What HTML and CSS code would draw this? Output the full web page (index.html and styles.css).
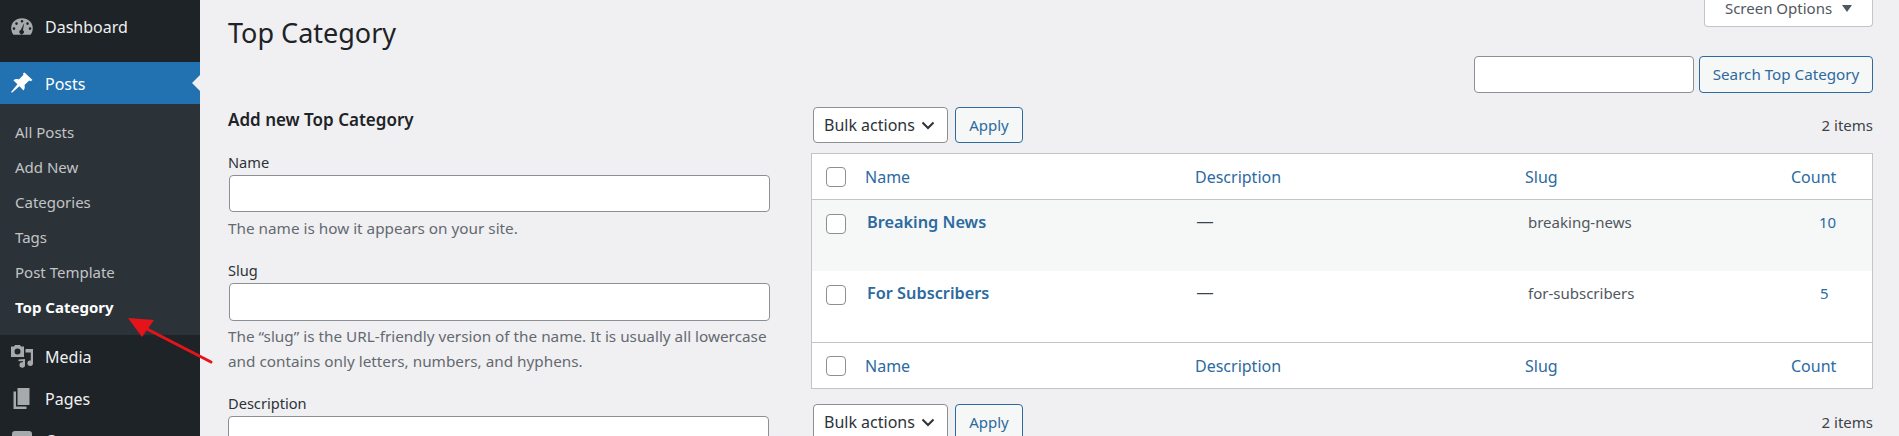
FILE: index.html
```html
<!DOCTYPE html>
<html lang="en">
<head>
<meta charset="utf-8">
<title>Top Category</title>
<link rel="stylesheet" href="styles.css">
</head>
<body>
<div class="shell">
  <nav class="sidebar">
    <a class="menu-item dash">
      <svg class="menu-icon" viewBox="0 0 24 24"><path fill="#a7aaad" fill-rule="evenodd" d="M12 3.200C5.600 3.200 1.200 7.600 1.200 13.200c0 2.600.9 4.800 2.300 6.600h17c1.400-1.800 2.300-4 2.300-6.600 0-5.600-4.400-10-10.800-10zM12 5a1.300 1.300 0 1 1 0 2.600A1.300 1.300 0 0 1 12 5zM6.500 7.300a1.300 1.300 0 1 1 0 2.600 1.300 1.300 0 0 1 0-2.600zm11 0a1.300 1.300 0 1 1 0 2.600 1.300 1.300 0 0 1 0-2.600zM4 12.300a1.300 1.300 0 1 1 0 2.600 1.300 1.300 0 0 1 0-2.600zm16 0a1.300 1.300 0 1 1 0 2.600 1.300 1.300 0 0 1 0-2.600zM14.200 8l-1.300 7.200a2.200 2.200 0 1 1-2.100-.2z"/></svg>
      <span>Dashboard</span>
    </a>
    <a class="menu-item current">
      <svg class="menu-icon" viewBox="0 0 24 24"><path fill="#fff" d="M14.500 1.500l8 7.500-2 1.300-1.300-.8-4.700 4.600c.6 2.200.2 3.900-.9 5.300l-4.200-4.200-7.400 6.500-.9-.8 6.300-7.600-4-4.100c1.500-1.100 3.300-1.400 5.400-.8l4.700-4.600-.6-1.200z"/></svg>
      <span>Posts</span>
    </a>
    <ul class="submenu">
      <li>All Posts</li>
      <li>Add New</li>
      <li>Categories</li>
      <li>Tags</li>
      <li>Post Template</li>
      <li class="active">Top Category</li>
    </ul>
    <a class="menu-item">
      <svg class="menu-icon" viewBox="0 0 24 24"><path fill="#a7aaad" fill-rule="evenodd" d="M1 2.500h3l1-1.500h5l1 1.500h3v10.500H1zM7.500 4.500a3 3 0 1 0 0 6 3 3 0 0 0 0-6zM15.500 5h7.500v14.200a2.800 2.800 0 1 1-2.200-2.700V8.500h-5.300zM8.500 15.500l6.500-.5v6a2.800 2.800 0 1 1-2.200-2.700v-1.300l-4.300.3z"/></svg>
      <span>Media</span>
    </a>
    <a class="menu-item">
      <svg class="menu-icon" viewBox="0 0 24 24"><path fill="#a7aaad" d="M7.500 2H19.500v17H7.500z"/><path fill="#a7aaad" d="M3.500 5.500h2.500v15h10.500v2.500H3.500z"/></svg>
      <span>Pages</span>
    </a>
    <a class="menu-item next-item">
      <svg class="menu-icon" viewBox="0 0 24 24"><rect fill="#a7aaad" x="2" y="3" width="20" height="15" rx="3"/></svg>
      <span>Comments</span>
    </a>
  </nav>

  <main class="content">
    <header class="page-head">
      <h1>Top Category</h1>
      <button class="screen-options">Screen Options <span class="tri"></span></button>
    </header>
    <div class="search-row">
      <input class="field search-field" type="text">
      <button class="btn btn-search">Search Top Category</button>
    </div>
    <div class="columns">
      <section class="form-col">
        <h2>Add new Top Category</h2>
        <label class="label">Name</label>
        <input class="field" type="text">
        <p class="help">The name is how it appears on your site.</p>
        <label class="label label-slug">Slug</label>
        <input class="field field-slug" type="text">
        <p class="help help-slug">The “slug” is the URL-friendly version of the name. It is usually all lowercase and contains only letters, numbers, and hyphens.</p>
        <label class="label label-desc">Description</label>
        <textarea class="field area"></textarea>
      </section>
      <section class="list-col">
        <div class="tablenav">
          <span class="select">Bulk actions<svg class="chev" viewBox="0 0 14 9"><path d="M1.500 1.500L7 7l5.500-5.500" fill="none" stroke="#2c3338" stroke-width="2"/></svg></span>
          <button class="btn btn-apply">Apply</button>
          <span class="count-items">2 items</span>
        </div>
        <table class="list">
          <thead>
            <tr>
              <th class="c-check"><span class="box"></span></th>
              <th class="c-name">Name</th>
              <th class="c-desc">Description</th>
              <th class="c-slug">Slug</th>
              <th class="c-count">Count</th>
            </tr>
          </thead>
          <tbody>
            <tr class="alt">
              <td class="c-check"><span class="box"></span></td>
              <td class="c-name"><a class="title">Breaking News</a></td>
              <td class="c-desc dash-cell">—</td>
              <td class="c-slug slug-cell">breaking-news</td>
              <td class="c-count num-cell num-wide">10</td>
            </tr>
            <tr>
              <td class="c-check"><span class="box"></span></td>
              <td class="c-name"><a class="title">For Subscribers</a></td>
              <td class="c-desc dash-cell">—</td>
              <td class="c-slug slug-cell">for-subscribers</td>
              <td class="c-count num-cell">5</td>
            </tr>
          </tbody>
          <tfoot>
            <tr>
              <th class="c-check"><span class="box"></span></th>
              <th class="c-name">Name</th>
              <th class="c-desc">Description</th>
              <th class="c-slug">Slug</th>
              <th class="c-count">Count</th>
            </tr>
          </tfoot>
        </table>
        <div class="tablenav bottom">
          <span class="select">Bulk actions<svg class="chev" viewBox="0 0 14 9"><path d="M1.500 1.500L7 7l5.500-5.500" fill="none" stroke="#2c3338" stroke-width="2"/></svg></span>
          <button class="btn btn-apply">Apply</button>
          <span class="count-items">2 items</span>
        </div>
      </section>
    </div>
  </main>
</div>
<svg class="arrow" viewBox="0 0 100 60" width="100" height="60"><path d="M91 45L25 11" stroke="#e5141a" stroke-width="3" stroke-linecap="round" fill="none"/><path d="M8 1L34 3L22 20z" fill="#e5141a"/></svg>
</body>
</html>
```
FILE: styles.css
```css
* { box-sizing: border-box; }
html, body { margin: 0; height: 436px; overflow: hidden; }
body {
  background: #f0f0f2;
  color: #3c434a;
  font-family: "Noto Sans", "Open Sans", sans-serif;
  font-size: 15px;
  position: relative;
}
.shell { display: flex; align-items: stretch; height: 436px; }

.sidebar { width: 200px; flex: none; background: #1d2327; color: #f0f0f1; padding-top: 6px; overflow: hidden; }
.menu-item { display: flex; align-items: center; height: 42px; padding-left: 10px; gap: 11px; font-size: 16px; }
.menu-item span { padding-top: 2px; }
.menu-item.dash { margin-bottom: 14px; }
.menu-item.dash span { padding-top: 0; }
.menu-item.current { background: #2271b1; color: #fff; position: relative; }
.menu-item.current::after {
  content: ""; position: absolute; right: 0; top: 50%; margin-top: -8px;
  border: 8px solid transparent; border-right-color: #f0f0f2; border-left-width: 0;
}
.menu-icon { width: 24px; height: 24px; flex: none; }
.submenu { list-style: none; margin: 0; padding: 10.500px 0 7.500px; background: #2c3338; height: 231px; }
.submenu li { height: 35.200px; line-height: 35px; padding-left: 15px; color: #c3c4c7; font-size: 15px; }
.submenu li.active { color: #fff; font-weight: 700; }

.content { flex: 1; min-width: 0; padding: 0 26px 0 28px; }
.page-head { display: flex; justify-content: space-between; align-items: flex-start; height: 56px; }
h1 { margin: 14px 0 0; font-size: 27px; line-height: 38px; font-weight: 400; color: #1d2327; }
.screen-options {
  width: 169px; height: 27px; padding: 0 0 10px; background: #fff; color: #50575e;
  border: 1px solid #c3c4c7; border-top: 0; border-radius: 0 0 4px 4px;
  font: inherit; font-size: 15px; display: flex; align-items: center; justify-content: center; gap: 10px;
}
.tri { width: 0; height: 0; border: 5px solid transparent; border-top: 7px solid #50575e; border-bottom: 0; }

.search-row { display: flex; justify-content: flex-end; gap: 5px; height: 51px; }
.field { display: block; height: 37px; width: 541px; border: 1px solid #8c8f94; border-radius: 4px; background: #fff; padding: 0 8px; margin: 0; outline: 0; }
.search-field { width: 220px; }
.btn {
  height: 37px; border: 1px solid #2c6a9f; border-radius: 4px; background: #f6f7f7; color: #2c6a9f;
  font: inherit; font-size: 15px; padding: 0;
}
.btn-search { width: 174px; padding-bottom: 1px; font-size: 15.200px; }

.columns { display: flex; gap: 41px; }
.form-col { width: 541px; flex: none; padding-left: 1px; box-sizing: content-box; }
.form-col h2 { margin: 2px 0 0 -1px; font-size: 17px; line-height: 22px; font-weight: 600; color: #1d2327; }
.label { display: block; margin-top: 20px; margin-left: -1px; height: 24px; line-height: 22px; color: #2c3338; font-size: 14.600px; }
.label-slug { margin-top: 18px; }
.label-desc { margin-top: 18px; }
.field-slug { height: 38px; }
.help { margin: 4px 0 0 -1px; font-size: 15.300px; line-height: 25px; color: #646970; width: 546px; }
.help-slug { margin-top: 3px; }
.area { height: 100px; margin-left: -1px; resize: none; }

.list-col { flex: 1; min-width: 0; }
.tablenav { display: flex; align-items: center; gap: 7px; height: 36px; padding-left: 2px; }
.tablenav.bottom { margin-top: 15px; }
.select {
  display: flex; align-items: center; justify-content: space-between;
  width: 135px; height: 36px; padding: 0 12px 0 10px; background: #fff; border: 1px solid #8c8f94; border-radius: 4px;
  color: #2c3338; font-size: 16px;
}
.chev { width: 14px; height: 9px; }
.btn-apply { width: 68px; height: 36px; }
.count-items { margin-left: auto; color: #3c434a; font-size: 15px; }

.list { width: 100%; margin-top: 10px; border-collapse: separate; border-spacing: 0; border: 1px solid #c3c4c7; background: #fff; table-layout: fixed; }
.list th, .list td { padding: 0; font-weight: 400; text-align: left; vertical-align: top; }
.list thead th, .list tfoot th { vertical-align: middle; color: #2c6a9f; font-size: 16px; }
.list thead th { border-bottom: 1px solid #c3c4c7; height: 46px; }
.list tfoot th { border-top: 1px solid #c3c4c7; height: 46px; }
.list tbody td { height: 71px; padding-top: 10px; }
.alt td { background: #f6f7f7; }
.c-check { width: 53px; }
.c-name { width: 330px; }
.c-desc { width: 330px; }
.c-slug { width: 266px; }
.box { display: block; width: 20px; height: 20px; margin-left: 14px; border: 1px solid #8c8f94; border-radius: 4px; background: #fff; }
.list tbody .box { margin-top: 4px; }
.title { display: block; margin-left: 2px; color: #2c6a9f; font-weight: 600; font-size: 16.300px; line-height: 24px; }
.dash-cell { color: #3c434a; line-height: 24px; font-size: 16px; font-family: "Liberation Sans", sans-serif; }
.list tbody td.dash-cell { padding-left: 2px; }
.slug-cell { color: #50575e; font-size: 15px; line-height: 24px; }
.list tbody td.slug-cell { padding-left: 3px; }
.num-cell { color: #2c6a9f; font-size: 15px; line-height: 24px; }
.list tbody td.num-cell { padding-left: 29px; }
.list tbody td.num-wide { padding-left: 28px; }

.arrow { position: absolute; left: 120px; top: 317px; }
```
